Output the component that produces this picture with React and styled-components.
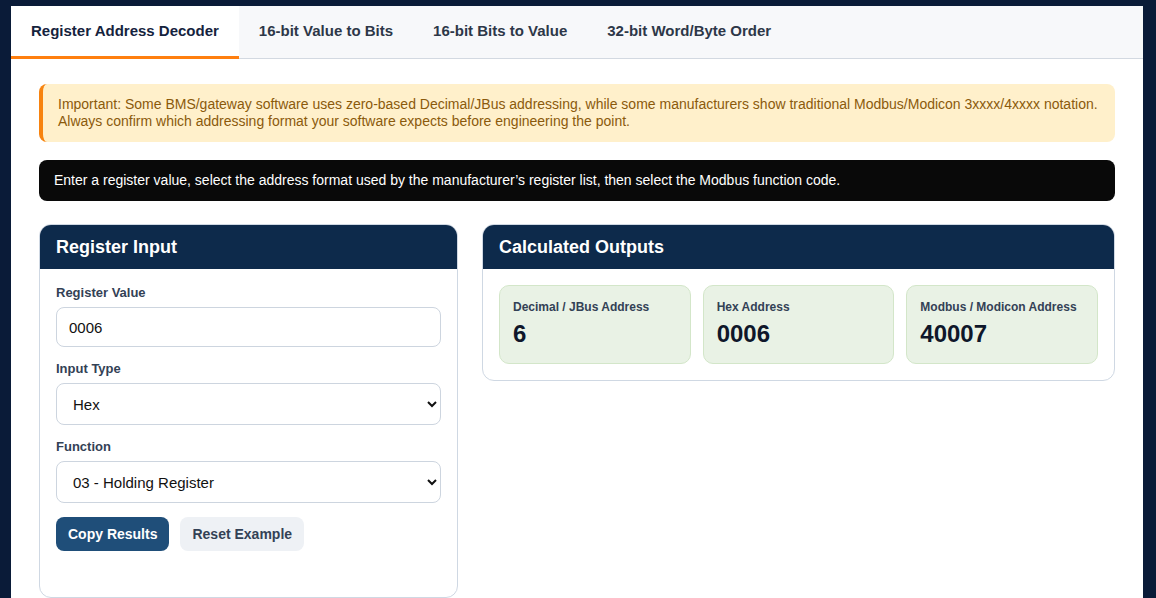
import React, { useState } from 'react';
import styled, { createGlobalStyle } from 'styled-components';

const GlobalStyle = createGlobalStyle`
    html, body {
        margin: 0;
        padding: 0;
        background: #0a1b38;
        font-family: "Liberation Sans", Arial, sans-serif;
    }
    * { box-sizing: border-box; }
`

const Page = styled.div`
    min-height: 598px;
    padding: 6px 13px 0 11px;
`

const Card = styled.div`
    background: #ffffff;
    min-height: 592px;
`

const TabBar = styled.nav`
    display: flex;
    background: #f7f8fa;
    border-bottom: 1px solid #d3d9e1;
`

const Tab = styled.button`
    font-family: inherit;
    font-size: 15px;
    font-weight: 700;
    color: ${props => props.active ? '#15233d' : '#2d3748'};
    background: ${props => props.active ? '#ffffff' : 'transparent'};
    border: none;
    border-bottom: 3px solid ${props => props.active ? '#ff7f0f' : 'transparent'};
    padding: 16px 20px 16px;
    margin-bottom: -1px;
    line-height: 18px;
    cursor: pointer;
`

const Content = styled.div`
    padding: 25px 28px 0;
`

const Warning = styled.div`
    background: #fff0cb;
    border-left: 4px solid #f7830f;
    border-radius: 8px;
    color: #8b5a0c;
    font-size: 14px;
    line-height: 17px;
    padding: 12px 15px 12px 15px;
`

const Info = styled.div`
    margin-top: 18px;
    background: #090909;
    color: #ffffff;
    border-radius: 8px;
    font-size: 14px;
    line-height: 17px;
    padding: 12px 15px;
`

const Grid = styled.div`
    display: grid;
    grid-template-columns: minmax(0, 419fr) minmax(0, 633fr);
    gap: 24px;
    margin-top: 23px;
    align-items: start;
`

const Panel = styled.section`
    border: 1px solid #cfd8e3;
    border-radius: 12px;
    overflow: hidden;
    background: #fff;
`

const PanelHead = styled.h2`
    margin: 0;
    background: #0d2a4b;
    color: #ffffff;
    font-size: 18px;
    font-weight: 700;
    line-height: 22px;
    padding: 11px 16px;
`

const PanelBody = styled.div`
    padding: ${props => props.pad || '16px'};
`

const Field = styled.div`
    display: flex;
    flex-direction: column;
    margin-bottom: 14px;
`

const Label = styled.label`
    font-size: 13px;
    font-weight: 700;
    color: #334155;
    line-height: 16px;
    margin-bottom: 6px;
`

const TextInput = styled.input`
    font-family: inherit;
    font-size: 15px;
    color: #111;
    height: 40px;
    border: 1px solid #cdd5df;
    border-radius: 8px;
    padding: 0 12px;
    outline: none;
`

const Select = styled.select`
    font-family: inherit;
    font-size: 15px;
    color: #111;
    height: 42px;
    border: 1px solid #cdd5df;
    border-radius: 8px;
    padding: 0 12px;
    background: #fff;
`

const Buttons = styled.div`
    display: flex;
    gap: 11px;
    margin-top: 2px;
`

const Button = styled.button`
    font-family: inherit;
    font-size: 14px;
    font-weight: 700;
    height: 34px;
    padding: 0 12px;
    border: none;
    border-radius: 8px;
    color: ${props => props.primary ? '#ffffff' : '#334155'};
    background: ${props => props.primary ? '#1f4e79' : '#eef1f5'};
    cursor: pointer;
`

const Outputs = styled.div`
    display: grid;
    grid-template-columns: repeat(3, 1fr);
    gap: 12px;
`

const OutCard = styled.div`
    background: #e9f2e5;
    border: 1px solid #d3e6c9;
    border-radius: 10px;
    padding: 14px 13px 15px;
`

const OutLabel = styled.div`
    font-size: 12px;
    font-weight: 700;
    color: #334155;
    line-height: 15px;
`

const OutValue = styled.div`
    font-size: 24px;
    font-weight: 700;
    color: #0f172a;
    line-height: 28px;
    margin-top: 5px;
`

const tabs = ['Register Address Decoder', '16-bit Value to Bits', '16-bit Bits to Value', '32-bit Word/Byte Order'];

const App = () => {
    const [active, setActive] = useState(0);
    const [value, setValue] = useState('0006');
    const [type, setType] = useState('hex');
    const [fn, setFn] = useState('03');

    const dec = type === 'hex' ? parseInt(value || '0', 16) : parseInt(value || '0', 10);
    const safe = isNaN(dec) ? 0 : dec;
    const hex = safe.toString(16).toUpperCase().padStart(4, '0');
    const base = fn === '03' ? 40001 : fn === '04' ? 30001 : fn === '02' ? 10001 : 1;

    return (
        <Page>
            <GlobalStyle />
            <Card>
                <TabBar>
                    {tabs.map((t, i) =>
                        <Tab key={t} active={i === active} onClick={() => setActive(i)}>{t}</Tab>
                    )}
                </TabBar>
                <Content>
                    <Warning>
                        Important: Some BMS/gateway software uses zero-based Decimal/JBus addressing, while some manufacturers show traditional Modbus/Modicon 3xxxx/4xxxx notation.<br />
                        Always confirm which addressing format your software expects before engineering the point.
                    </Warning>
                    <Info>
                        Enter a register value, select the address format used by the manufacturer’s register list, then select the Modbus function code.
                    </Info>
                    <Grid>
                        <Panel>
                            <PanelHead>Register Input</PanelHead>
                            <PanelBody pad="16px 16px 46px">
                                <Field>
                                    <Label>Register Value</Label>
                                    <TextInput value={value} onChange={e => setValue(e.target.value)} />
                                </Field>
                                <Field>
                                    <Label>Input Type</Label>
                                    <Select value={type} onChange={e => setType(e.target.value)}>
                                        <option value="hex">Hex</option>
                                        <option value="dec">Decimal</option>
                                    </Select>
                                </Field>
                                <Field>
                                    <Label>Function</Label>
                                    <Select value={fn} onChange={e => setFn(e.target.value)}>
                                        <option value="01">01 - Coil</option>
                                        <option value="02">02 - Discrete Input</option>
                                        <option value="03">03 - Holding Register</option>
                                        <option value="04">04 - Input Register</option>
                                    </Select>
                                </Field>
                                <Buttons>
                                    <Button primary>Copy Results</Button>
                                    <Button onClick={() => { setValue('0006'); setType('hex'); setFn('03'); }}>Reset Example</Button>
                                </Buttons>
                            </PanelBody>
                        </Panel>
                        <Panel>
                            <PanelHead>Calculated Outputs</PanelHead>
                            <PanelBody>
                                <Outputs>
                                    <OutCard>
                                        <OutLabel>Decimal / JBus Address</OutLabel>
                                        <OutValue>{safe}</OutValue>
                                    </OutCard>
                                    <OutCard>
                                        <OutLabel>Hex Address</OutLabel>
                                        <OutValue>{hex}</OutValue>
                                    </OutCard>
                                    <OutCard>
                                        <OutLabel>Modbus / Modicon Address</OutLabel>
                                        <OutValue>{base + safe}</OutValue>
                                    </OutCard>
                                </Outputs>
                            </PanelBody>
                        </Panel>
                    </Grid>
                </Content>
            </Card>
        </Page>
    );
}

export default App;
